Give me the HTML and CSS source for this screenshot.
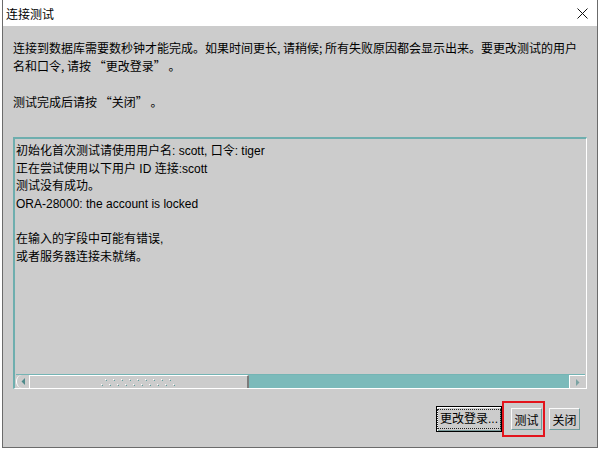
FILE: index.html
```html
<!DOCTYPE html>
<html>
<head>
    <title>连接测试</title>
    <link rel="stylesheet" href="styles.css">
</head>
<body>
    <div class="window">
        <div class="titlebar">
            <span class="title">连接测试</span>
            <svg class="close" width="11" height="11" viewBox="0 0 11 11">
                <path d="M0.5 0.5L10.5 10.5M10.5 0.5L0.5 10.5" stroke="#111" stroke-width="1"/>
            </svg>
        </div>

        <div class="content">
            <div class="intro">
                <p>连接到数据库需要数秒钟才能完成。如果时间更长, 请稍候; 所有失败原因都会显示出来。要更改测试的用户<br>名和口令, 请按 “更改登录” 。</p>
                <p>测试完成后请按 “关闭” 。</p>
            </div>

            <div class="log">
                <div class="log-text">
                    <div class="line">初始化首次测试请使用用户名: scott, 口令: tiger</div>
                    <div class="line">正在尝试使用以下用户 ID 连接:scott</div>
                    <div class="line">测试没有成功。</div>
                    <div class="line">ORA-28000: the account is locked</div>
                    <div class="line">&nbsp;</div>
                    <div class="line">在输入的字段中可能有错误,</div>
                    <div class="line">或者服务器连接未就绪。</div>
                </div>
                <div class="hscroll">
                    <div class="arrow arrow-left">
                        <svg width="4" height="7" viewBox="0 0 4 7"><polygon points="4,0 4,7 0.5,3.5" fill="#4f8a8a"/></svg>
                    </div>
                    <div class="thumb">
                        <svg width="76" height="7" viewBox="0 0 76 7">
                            <defs>
                                <g id="dot">
                                    <rect width="1" height="1" fill="#fff"/>
                                    <rect x="1" y="1" width="1" height="1" fill="#5f9e9e"/>
                                </g>
                            </defs>
                            <use href="#dot" x="4" y="0"/><use href="#dot" x="12" y="0"/><use href="#dot" x="20" y="0"/>
                            <use href="#dot" x="28" y="0"/><use href="#dot" x="36" y="0"/><use href="#dot" x="44" y="0"/>
                            <use href="#dot" x="52" y="0"/><use href="#dot" x="60" y="0"/><use href="#dot" x="68" y="0"/>
                            <use href="#dot" x="0" y="5"/><use href="#dot" x="8" y="5"/><use href="#dot" x="16" y="5"/>
                            <use href="#dot" x="24" y="5"/><use href="#dot" x="32" y="5"/><use href="#dot" x="40" y="5"/>
                            <use href="#dot" x="48" y="5"/><use href="#dot" x="56" y="5"/><use href="#dot" x="64" y="5"/>
                            <use href="#dot" x="72" y="5"/>
                        </svg>
                    </div>
                    <div class="track"></div>
                    <div class="arrow arrow-right">
                        <svg width="4" height="7" viewBox="0 0 4 7"><polygon points="0,0 0,7 3.5,3.5" fill="#7aa3a3"/></svg>
                    </div>
                </div>
            </div>

            <div class="actions">
                <button class="btn btn-default"><span class="focus-ring">更改登录...</span></button>
                <button class="btn btn-test">测试</button>
                <button class="btn btn-close">关闭</button>
            </div>
        </div>
    </div>
</body>
</html>
```

FILE: styles.css
```css
body {
    margin: 0;
    background: #fff;
    font-family: "Liberation Sans", "Noto Sans CJK SC", sans-serif;
    font-size: 12px;
    color: #000;
}
.window {
    margin-left: 2px;
    width: 596px;
    height: 448px;
    box-sizing: border-box;
    border: 1px solid #6b6b6b;
    border-top: 0;
    background: #ccc;
    display: flex;
    flex-direction: column;
}
.titlebar {
    flex: none;
    height: 26px;
    background: #fff;
    display: flex;
    align-items: center;
    justify-content: space-between;
    padding: 0 9px 0 3px;
}
.title {
    font-family: "Noto Sans CJK SC", sans-serif;
}
.content {
    flex: 1;
    display: flex;
    flex-direction: column;
    padding: 13px 10px 0 10px;
}
.intro p {
    margin: 0;
    line-height: 18px;
    font-family: "Noto Sans CJK SC", sans-serif;
}
.intro p + p {
    margin-top: 18px;
}
.log {
    margin-top: 26px;
    height: 252px;
    box-sizing: border-box;
    border-style: solid;
    border-width: 2px 1px 1px 2px;
    border-color: #6eaeae #fff #fff #6eaeae;
    display: flex;
    flex-direction: column;
}
.log-text {
    flex: 1;
    padding: 4px 0 0 1px;
    line-height: 17.6px;
}
.hscroll {
    flex: none;
    height: 14px;
    box-sizing: border-box;
    margin: 0 1px;
    border-top: 1px solid #74b4b4;
    display: flex;
}
.arrow {
    display: flex;
    align-items: center;
    justify-content: center;
    background: #ccc;
    box-sizing: border-box;
}
.arrow-left {
    width: 14px;
    border-left: 1px solid #fff;
    border-right: 1px solid #fff;
    border-radius: 6px 0 0 6px;
}
.arrow-right {
    width: 16px;
    border-left: 1px solid #fff;
    border-top: 1px solid #fff;
    border-radius: 0 0 5px 0;
}
.thumb {
    flex: 0 0 219px;
    box-sizing: border-box;
    border-top: 1px solid #fff;
    border-right: 2px solid #7c7c7c;
    display: flex;
    align-items: center;
    justify-content: center;
}
.track {
    flex: 1;
    background: #7bbaba;
}
.actions {
    display: flex;
    justify-content: flex-end;
    align-items: center;
    margin-top: 17px;
    padding-right: 7px;
}
.btn {
    font: inherit;
    color: #000;
    width: 31px;
    height: 22px;
    padding: 0;
    background: #ccc;
    border: 1px solid;
    border-color: #fafafa #6f9d9d #6f9d9d #fafafa;
    display: inline-flex;
    align-items: center;
    justify-content: center;
}
.btn-default {
    width: 66px;
    height: 26px;
    border-color: #000;
    box-shadow: inset 1px 1px #fff, inset -1px -1px #7a9a9a;
}
.focus-ring {
    border: 1px dotted #222;
    padding: 0 2px;
    line-height: 18px;
}
.btn-test {
    position: relative;
    margin-left: 9px;
}
.btn-test::after {
    content: "";
    position: absolute;
    left: -10px;
    right: -4px;
    top: -8px;
    bottom: -8px;
    border: 2px solid #e3141c;
}
.btn-close {
    margin-left: 7px;
}
```
